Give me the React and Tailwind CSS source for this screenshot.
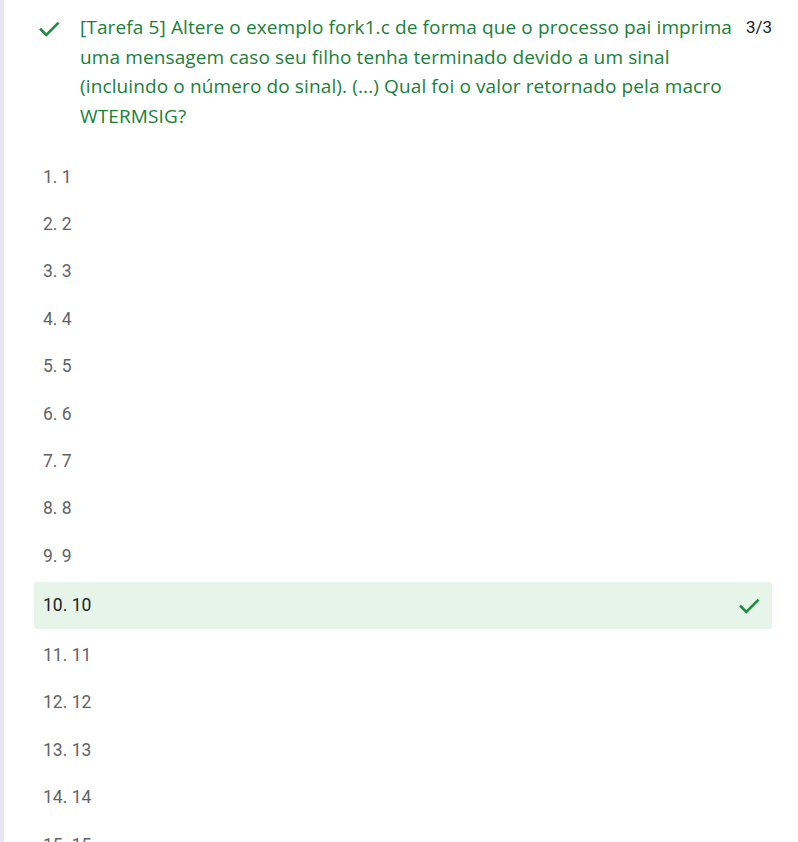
import React from 'react'

const Check = ({ className }) => (
  <svg viewBox="0 0 24 24" className={className} fill="none">
    <path d="M4.5 12.5l5 5L20 7" stroke="#1e8e3e" strokeWidth="2.4" strokeLinecap="square" />
  </svg>
)

const options = Array.from({ length: 15 }, (_, i) => i + 1)

const questionLines = [
  '[Tarefa 5] Altere o exemplo fork1.c de forma que o processo pai imprima',
  'uma mensagem caso seu filho tenha terminado devido a um sinal',
  '(incluindo o número do sinal). (...) Qual foi o valor retornado pela macro',
  'WTERMSIG?',
]

const App = () => {
  return (
    <div className="min-h-screen bg-white flex">
      <div className="w-[4px] bg-[#e8e6f4] shrink-0" />
      <div className="flex-1 pl-[30px] pr-[26px] pt-[13px] overflow-hidden h-[842px]">
        {/* Question header */}
        <div className="flex items-start">
          <Check className="w-[26px] h-[26px] mt-[3px] ml-[2px] shrink-0" />
          <p className="ml-[18px] flex-1 min-w-0 text-[19px] leading-[29.5px] text-[#188038] font-['Open_Sans',sans-serif] tracking-[0.12px]">
            {questionLines.map((line, i) => (
              <span key={i} className="block whitespace-nowrap">{line}</span>
            ))}
          </p>
          <span className="shrink-0 ml-[8px] text-[17px] leading-[29.5px] text-[#202124] font-['Roboto',sans-serif]">3/3</span>
        </div>

        {/* Options */}
        <div className="mt-[22px] flex flex-col">
          {options.map((n) =>
            n === 10 ? (
              <div
                key={n}
                className="my-[2.5px] h-[47px] rounded-[4px] bg-[#e6f4ea] flex items-center justify-between pl-[9px] pr-[10px] font-['Roboto',sans-serif] text-[17.5px] text-[#202124]"
              >
                <span>{n}. {n}</span>
                <Check className="w-[26px] h-[26px]" />
              </div>
            ) : (
              <div
                key={n}
                className="h-[47.4px] flex items-center pl-[9px] font-['Roboto',sans-serif] text-[17.5px] text-[#5f6368]"
              >
                {n}. {n}
              </div>
            )
          )}
        </div>
      </div>
    </div>
  )
}

export default App
